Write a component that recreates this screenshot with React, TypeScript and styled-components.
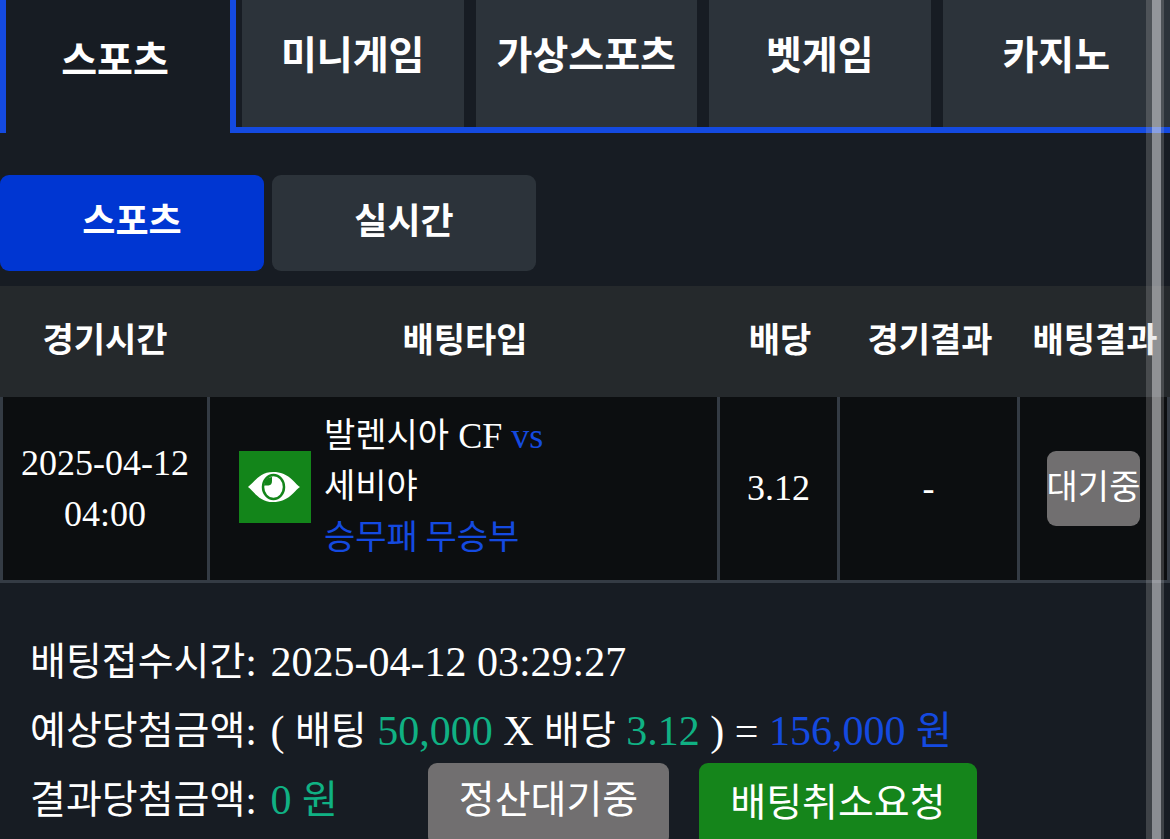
import React from "react";
import styled, { createGlobalStyle } from "styled-components";

const GlobalStyle = createGlobalStyle`
  *, *::before, *::after { box-sizing: border-box; }
  body { margin: 0; background: #171c23; }
  button { font: inherit; color: inherit; border: 0; padding: 0; margin: 0; cursor: pointer; }
`;

const korean = `"Noto Sans CJK KR", sans-serif`;

const Page = styled.main`
  height: 100vh;
  overflow: auto;
  scrollbar-width: none;
  background: #171c23;
  color: #fff;
  font-family: "Liberation Serif", "Noto Sans CJK KR", serif;
`;

const TabBar = styled.nav`
  display: grid;
  grid-template-columns: 236px repeat(4, minmax(0, 1fr));
  height: 133px;
`;

const TabSlot = styled.div<{ $active?: boolean }>`
  display: flex;
  border: 0 solid #144ae0;
  border-width: ${(p) => (p.$active ? "0 6px" : "0 0 6px")};
  padding: ${(p) => (p.$active ? "0" : "0 6px")};
  &:last-child { padding-right: 0; }
`;

const Tab = styled.button<{ $active?: boolean }>`
  && {
    flex: 1;
    padding: ${(p) => (p.$active ? "0 6px 18px 0" : "0 0 22px")};
    background: ${(p) => (p.$active ? "#171c23" : "#2c333a")};
    font: 700 39px/1 ${korean};
    white-space: nowrap;
  }
`;

const SubTabs = styled.div`
  display: flex;
  gap: 8px;
  margin: 42px 0 15px;
`;

const SubTab = styled.button<{ $active?: boolean }>`
  && {
    width: 264px;
    height: 96px;
    padding-bottom: 10px;
    border-radius: 9px;
    background: ${(p) => (p.$active ? "#0036d2" : "#2c333a")};
    font: 700 36px/1 ${korean};
  }
`;

const BetTable = styled.table`
  width: 100%;
  table-layout: fixed;
  border-collapse: separate;
  border-spacing: 0;
`;

const Col = styled.col<{ $width?: number }>`
  width: ${(p) => (p.$width ? `${p.$width}px` : "auto")};
`;

const HeadCell = styled.th`
  height: 111px;
  padding: 0 0 8px;
  background: #25292c;
  font: 700 34px/1 ${korean};
  white-space: nowrap;
`;

const Cell = styled.td`
  height: 186px;
  padding: 0;
  border: 0 solid #343b44;
  border-width: 0 3px 3px 0;
  background: #0c0e10;
  font-size: 36px;
  line-height: 51px;
  text-align: center;
  &:first-child { border-left-width: 3px; }
`;

const Match = styled.div`
  display: flex;
  align-items: center;
  gap: 13px;
  padding: 0 0 3px 29px;
  text-align: left;
`;

const ViewButton = styled.button`
  && {
    display: flex;
    flex: none;
    width: 72px;
    height: 72px;
    background: #13851a;
  }
`;

const Ko = styled.span<{ $size: number }>`
  font: 400 ${(p) => p.$size}px/1 ${korean};
  vertical-align: 1px;
`;

const Blue = styled.span`
  color: #144ae0;
`;

const Green = styled.span`
  color: #10b183;
`;

const StatusBadge = styled.span`
  display: inline-block;
  height: 75px;
  border-radius: 9px;
  background: #716f70;
  font: 400 34px/67px ${korean};
  vertical-align: middle;
`;

const Summary = styled.section`
  padding: 45px 30px 30px;
  font-size: 42px;
  line-height: 69px;
`;

const Line = styled.div`
  display: flex;
  align-items: flex-start;
  min-height: 69px;
  white-space: pre;
`;

const Label = styled.span`
  margin-right: 3px;
`;

const Actions = styled.div`
  display: flex;
  align-items: flex-start;
  gap: 30px;
  margin: -3px 0 0 90px;
`;

const ActionButton = styled.button<{ $primary?: boolean }>`
  && {
    height: ${(p) => (p.$primary ? "88px" : "83px")};
    padding: 0 31px 16px;
    border-radius: 9px;
    background: ${(p) => (p.$primary ? "#15851b" : "#716f70")};
    font: 400 39px/1 ${korean};
  }
`;

const ScrollTrack = styled.div`
  position: fixed;
  top: 0;
  bottom: 0;
  right: 6px;
  width: 18px;
  padding: 0 3px 0 6px;
  background: rgba(180, 180, 180, 0.25);
  pointer-events: none;
`;

const ScrollThumb = styled.div`
  height: 100%;
  background: rgba(240, 240, 245, 0.43);
`;

const EyeIcon = () => (
  <svg width="72" height="72" viewBox="0 0 72 72" aria-hidden="true">
    <path d="M9 36C15 32 20 21 34 21C50 21 55 32 61 36C55 40 50 51 34 51C20 51 15 40 9 36Z" fill="#fff" />
    <ellipse cx="34.5" cy="36" rx="10.5" ry="12" fill="#fff" stroke="#13851a" strokeWidth="2.5" />
    <path d="M25 34.5H29.5Q33 34 33 30V26Q26 26 25 34.5Z" fill="#13851a" />
  </svg>
);

const tabs = ["스포츠", "미니게임", "가상스포츠", "벳게임", "카지노"];
const headings = ["경기시간", "배팅타입", "배당", "경기결과", "배팅결과"];

export default function App() {
  return (
    <>
      <GlobalStyle />
      <Page>
        <TabBar>
          {tabs.map((label, i) => (
            <TabSlot key={label} $active={i === 0}>
              <Tab type="button" $active={i === 0}>{label}</Tab>
            </TabSlot>
          ))}
        </TabBar>
        <SubTabs>
          <SubTab type="button" $active>스포츠</SubTab>
          <SubTab type="button">실시간</SubTab>
        </SubTabs>
        <BetTable>
          <colgroup>
            <Col $width={210} />
            <Col />
            <Col $width={120} />
            <Col $width={180} />
            <Col $width={150} />
          </colgroup>
          <thead>
            <tr>
              {headings.map((label) => (
                <HeadCell key={label} scope="col">{label}</HeadCell>
              ))}
            </tr>
          </thead>
          <tbody>
            <tr>
              <Cell>2025-04-12<br />04:00</Cell>
              <Cell>
                <Match>
                  <ViewButton type="button" aria-label="상세보기"><EyeIcon /></ViewButton>
                  <div>
                    <Ko $size={34}>발렌시아</Ko> CF <Blue>vs</Blue>
                    <br />
                    <Ko $size={34}>세비야</Ko>
                    <br />
                    <Blue><Ko $size={34}>승무패 무승부</Ko></Blue>
                  </div>
                </Match>
              </Cell>
              <Cell>3.12</Cell>
              <Cell>-</Cell>
              <Cell><StatusBadge>대기중</StatusBadge></Cell>
            </tr>
          </tbody>
        </BetTable>
        <Summary>
          <Line>
            <Label><Ko $size={39}>배팅접수시간</Ko>: </Label>
            <span>2025-04-12 03:29:27</span>
          </Line>
          <Line>
            <Label><Ko $size={39}>예상당첨금액</Ko>: </Label>
            <span>
              ( <Ko $size={39}>배팅</Ko> <Green>50,000</Green> X{" "}
              <Ko $size={39}>배당</Ko> <Green>3.12</Green> ) = <Blue>156,000 <Ko $size={39}>원</Ko></Blue>
            </span>
          </Line>
          <Line>
            <Label><Ko $size={39}>결과당첨금액</Ko>: </Label>
            <Green>0 <Ko $size={39}>원</Ko></Green>
            <Actions>
              <ActionButton type="button">정산대기중</ActionButton>
              <ActionButton type="button" $primary>배팅취소요청</ActionButton>
            </Actions>
          </Line>
        </Summary>
      </Page>
      <ScrollTrack><ScrollThumb /></ScrollTrack>
    </>
  );
}
